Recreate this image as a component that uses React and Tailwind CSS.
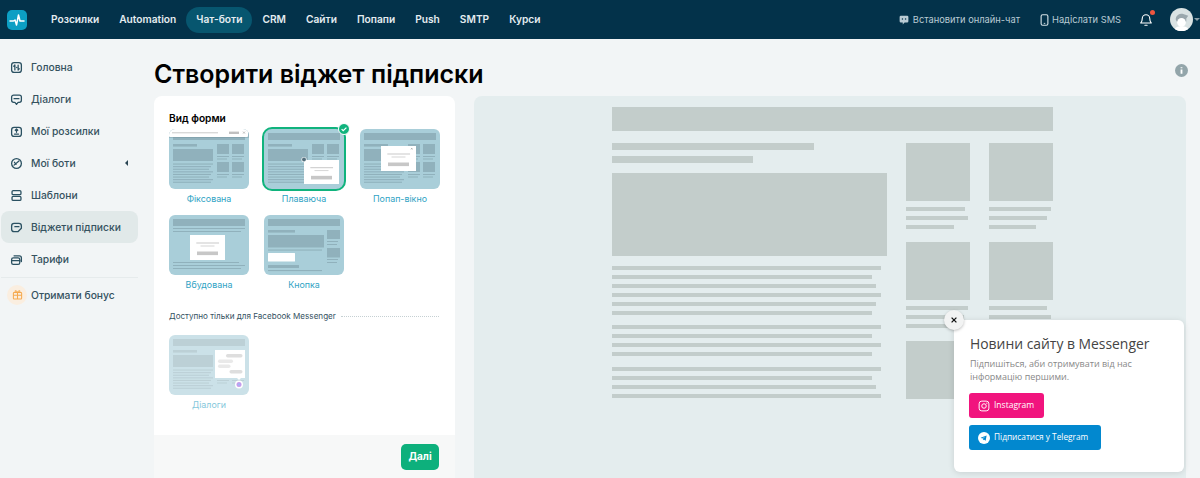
import React from 'react';

const NAV = ['Розсилки', 'Automation', 'Чат-боти', 'CRM', 'Сайти', 'Попапи', 'Push', 'SMTP', 'Курси'];
const TONE = '#90b1bc';

const stroke = { fill: 'none', stroke: 'currentColor', strokeWidth: 1.6, strokeLinecap: 'round', strokeLinejoin: 'round' };
const SIcons = {
  home: <g {...stroke}><rect x="2" y="2" width="12" height="12" rx="3" /><path d="M6 5v6M6 5 4.7 6.4M10 11V5M10 11l1.3-1.4M8.2 8h0" /></g>,
  chat: <g {...stroke}><path d="M4.5 2.5h7a2.5 2.5 0 0 1 2.5 2.5v4a2.5 2.5 0 0 1-2.5 2.5H10L8 14l-2-2.5H4.5A2.5 2.5 0 0 1 2 9V5a2.5 2.5 0 0 1 2.5-2.5Z" /><path d="M5 7h6" /></g>,
  mail: <g {...stroke}><rect x="2" y="3" width="12" height="11" rx="3" /><path d="M8 9V5M6.5 6.5 8 5l1.5 1.5M5.5 11.2h5" /></g>,
  bot: <g {...stroke}><circle cx="8" cy="8" r="6" /><path d="m5 10 6-5M5.5 6.5l2 2.5" /></g>,
  tpl: <g {...stroke}><rect x="2.5" y="2" width="11" height="5" rx="1.5" /><rect x="2.5" y="9" width="11" height="5" rx="1.5" /></g>,
  widget: <g {...stroke}><path d="M10 13H5a3 3 0 0 1-3-3V6a3 3 0 0 1 3-3h6a3 3 0 0 1 3 3v3l-4 4Z" /><path d="M6 7h5" /></g>,
  price: <g {...stroke}><rect x="2" y="6" width="10" height="8" rx="2" /><path d="M5 3.5h6.5a2.5 2.5 0 0 1 2.5 2.5v4.5M2 9.5h10" /></g>,
};

const MENU = [
  ['Головна', 'home'], ['Діалоги', 'chat'], ['Мої розсилки', 'mail'], ['Мої боти', 'bot', true],
  ['Шаблони', 'tpl'], ['Віджети підписки', 'widget', false, true], ['Тарифи', 'price'],
];

function Lines({ y, x = 4, w = 40, dy = 2.6, n = 8, c = TONE }) {
  return Array.from({ length: n }).map((_, i) => (
    <rect key={i} x={x} y={y + i * dy} width={w - (i % 3) * 2} height="1.1" fill={c} />
  ));
}

function Side({ c = TONE }) {
  return (
    <g fill={c}>
      <rect x="48" y="15" width="12" height="10" /><rect x="63" y="15" width="12" height="10" />
      <rect x="48" y="27" width="12" height="1" /><rect x="48" y="29.5" width="10" height="1" />
      <rect x="63" y="27" width="12" height="1" /><rect x="63" y="29.5" width="10" height="1" />
      <rect x="48" y="33" width="12" height="10" /><rect x="63" y="33" width="12" height="10" />
      <rect x="48" y="45" width="12" height="1" /><rect x="48" y="47.5" width="10" height="1" />
      <rect x="63" y="45" width="12" height="1" /><rect x="63" y="47.5" width="10" height="1" />
    </g>
  );
}

function Base() {
  return (
    <>
      <rect x="4" y="4" width="72" height="7" fill={TONE} />
      <rect x="4" y="15" width="24" height="2.6" fill={TONE} />
      <rect x="4" y="20" width="40" height="12" fill={TONE} />
      <Side />
      <Lines y={34.5} />
    </>
  );
}

function Card({ x, y, w, h }) {
  return (
    <g>
      <rect x={x} y={y} width={w} height={h} fill="#fff" />
      <rect x={x + w * 0.18} y={y + h * 0.3} width={w * 0.65} height="1" fill="#c9c9c9" />
      <rect x={x + w * 0.3} y={y + h * 0.42} width={w * 0.4} height="1" fill="#d6d6d6" />
      <rect x={x + w * 0.2} y={y + h * 0.66} width={w * 0.6} height="3.6" fill="#c7c7c7" />
    </g>
  );
}

function Thumb({ kind }) {
  const body = {
    fixed: (
      <>
        <Base />
        <rect x="0" y="0" width="80" height="9" fill="#6d8a95" opacity="0.35" />
        <rect x="0" y="0" width="79" height="8" rx="1" fill="#fff" />
        <rect x="3" y="3.3" width="46" height="1" fill="#c9c9c9" />
        <rect x="60" y="2.6" width="10" height="2.4" fill="#c0c0c0" />
        <path d="m74 2.6 2 2M76 2.6l-2 2" stroke="#999" strokeWidth="0.6" />
      </>
    ),
    float: (
      <>
        <Base />
        <Card x={40} y={31} w={35} h={24} />
        <circle cx="40" cy="30.5" r="2.6" fill="#fff" opacity="0.9" />
        <circle cx="40" cy="30.5" r="1.9" fill="#55707d" />
      </>
    ),
    popup: (
      <>
        <Base />
        <Card x={21} y={17} w={35} h={25} />
        <path d="m51 19 1.5 1.5m0-1.5L51 20.500" stroke="#999" strokeWidth="0.6" />
      </>
    ),
    embed: (
      <>
        <rect x="4" y="4" width="72" height="7" fill={TONE} />
        <rect x="4" y="13" width="72" height="1" fill={TONE} />
        <rect x="4" y="16" width="68" height="1" fill={TONE} />
        <Card x={21} y={20} w={35} h={25} />
        <rect x="4" y="47" width="66" height="1" fill={TONE} />
        <rect x="4" y="50" width="72" height="1" fill={TONE} />
        <rect x="4" y="53" width="68" height="1" fill={TONE} />
      </>
    ),
    button: (
      <>
        <rect x="4" y="4" width="72" height="7" fill={TONE} />
        <rect x="4" y="15" width="27" height="2.6" fill={TONE} />
        <rect x="4" y="20" width="56" height="12.500" fill={TONE} />
        <rect x="4" y="34.500" width="54" height="1.100" fill={TONE} />
        <rect x="4" y="38" width="27" height="8.600" rx="0.500" fill="#fff" />
        <rect x="4" y="50" width="31" height="3" fill={TONE} />
        <rect x="4" y="55" width="54" height="1.100" fill={TONE} />
        <rect x="63" y="15" width="13" height="9" fill={TONE} />
        <rect x="63" y="26" width="11" height="1" fill={TONE} />
        <rect x="63" y="29" width="10" height="1" fill={TONE} />
        <rect x="63" y="33" width="13" height="9.500" fill={TONE} />
        <rect x="63" y="44" width="11" height="1" fill={TONE} />
        <rect x="63" y="47" width="10" height="1" fill={TONE} />
      </>
    ),
    dialogs: (
      <>
        <Base />
        <rect x="46" y="15" width="30" height="28" fill="#fff" />
        <path d="m68 43 2 2 2-2Z" fill="#fff" />
        <rect x="57" y="19" width="16.500" height="3.500" rx="1.700" fill="#c9c9c9" />
        <rect x="49" y="24.500" width="15" height="3.500" rx="1.700" fill="#dcdcdc" />
        <rect x="49" y="29.500" width="12.500" height="3.500" rx="1.700" fill="#dcdcdc" />
        <rect x="60.500" y="35" width="13" height="3.500" rx="1.700" fill="#c9c9c9" />
        <circle cx="70" cy="49.500" r="4" fill="#fff" />
        <circle cx="70" cy="49.500" r="2.500" fill="#a05be0" />
        <circle cx="70" cy="49.500" r="1.100" fill="#5a8ff0" />
      </>
    ),
  }[kind];
  return (
    <svg viewBox="0 0 80 60" className="block w-full h-full rounded-[6px] bg-[#a9ced9]">
      {body}
    </svg>
  );
}

function Option({ kind, label, selected, dim }) {
  return (
    <div className={`w-[80px] flex flex-col items-center ${dim ? 'opacity-60' : ''}`}>
      <div className={`relative w-[80px] h-[60px] ${selected ? 'rounded-[8px] outline-[2.500px] outline-[#10b37d]' : ''}`}>
        <Thumb kind={kind} />
        {selected && (
          <span className="absolute -right-[6px] -top-[6px] w-[12px] h-[12px] rounded-full bg-[#10b37d] border border-white flex items-center justify-center">
            <svg viewBox="0 0 10 10" className="w-[8px] h-[8px]"><path d="m2 5.200 2 2 4-4" fill="none" stroke="#fff" strokeWidth="1.500" /></svg>
          </span>
        )}
      </div>
      <span className="mt-[3px] text-[8.900px] leading-[14px] text-[#2fa3c4]">{label}</span>
    </div>
  );
}

const Bar = ({ className }) => <div className={`bg-[#c3cdcb] ${className}`} />;

function TextBlock({ widths }) {
  return (
    <div className="flex flex-col gap-[5px]">
      {widths.map((w, i) => (
        <div key={i} className="h-[4px] bg-[#c3cdcb]" style={{ width: w }} />
      ))}
    </div>
  );
}

function Tile({ widths }) {
  return (
    <div className="w-[64px]">
      <Bar className="h-[58px]" />
      <div className="mt-[6px]"><TextBlock widths={widths} /></div>
    </div>
  );
}

export default function App() {
  return (
    <div className="w-[1200px] h-[478px] overflow-hidden flex flex-col bg-[#f2f5f6] font-['Inter','Noto_Sans',sans-serif]">
      <header className="h-[39px] shrink-0 bg-[#03324a] flex items-center pl-[7px] text-[#e4ecf0]">
        <div className="w-[20px] h-[20px] rounded-[5px] bg-[#0c9fc4] flex items-center justify-center">
          <svg viewBox="0 0 20 20" className="w-[20px] h-[20px]">
            <path d="M3 11h3.500l1.500-1 1.500 5 2-10 1.500 6h4" fill="none" stroke="#fff" strokeWidth="1.500" strokeLinejoin="round" strokeLinecap="round" />
          </svg>
        </div>
        <nav className="ml-[14px] flex items-center">
          {NAV.map((n) => (
            <span
              key={n}
              className={`h-[26px] flex items-center px-[10px] rounded-full text-[10.200px] font-semibold ${n === 'Чат-боти' ? 'bg-[#07566f]' : ''}`}
            >
              {n}
            </span>
          ))}
        </nav>
        <div className="ml-auto flex items-center text-[9.300px] text-[#b9cbd4]">
          <svg viewBox="0 0 16 16" className="w-[10px] h-[10px] mr-[4px]">
            <path d="M3 1h10a2 2 0 0 1 2 2v7a2 2 0 0 1-2 2H9l-3 3v-3H3a2 2 0 0 1-2-2V3a2 2 0 0 1 2-2Z" fill="#b9cbd4" />
            <circle cx="5.500" cy="6.500" r="1.200" fill="#03324a" /><circle cx="10.500" cy="6.500" r="1.200" fill="#03324a" />
          </svg>
          <span>Встановити онлайн-чат</span>
          <svg viewBox="0 0 12 16" className="ml-[20px] w-[9px] h-[12px] mr-[3px]">
            <rect x="1.500" y="1" width="9" height="14" rx="2" fill="none" stroke="#d7e3e8" strokeWidth="1.500" />
            <path d="M5 12.500h2" stroke="#d7e3e8" strokeWidth="1.200" />
          </svg>
          <span>Надіслати SMS</span>
        </div>
        <div className="relative ml-[19px] w-[12px] h-[14px]">
          <svg viewBox="0 0 16 18" className="w-[12px] h-[14px]">
            <path d="M8 2a5 5 0 0 0-5 5c0 4-2 6-2 6h14s-2-2-2-6a5 5 0 0 0-5-5ZM6.500 16h3" fill="none" stroke="#fff" strokeWidth="1.500" strokeLinejoin="round" strokeLinecap="round" />
          </svg>
          <span className="absolute -top-[3px] -right-[3px] w-[5px] h-[5px] rounded-full bg-[#f0563f]" />
        </div>
        <div className="ml-[18px] w-[23px] h-[23px] rounded-full bg-[#d9e2e3] overflow-hidden">
          <svg viewBox="0 0 24 24" className="w-[23px] h-[23px]">
            <path d="M6 12c0-4 3-6 7-6l6 2-2 3v3H7Z" fill="#9aa7ad" />
            <circle cx="12" cy="15" r="4.500" fill="#fff" />
            <path d="M4 24c1-4 4-5 8-5s7 1 8 5Z" fill="#fff" />
          </svg>
        </div>
        <span className="ml-[1px] w-0 h-0 border-x-[3px] border-x-transparent border-t-[3px] border-t-[#8ba0aa]" />
      </header>

      <div className="flex flex-1 min-h-0">
        <aside className="w-[154px] shrink-0 pt-[12px] pl-[1px]">
          <div className="w-[137px]">
            {MENU.map(([label, icon, arrow, active]) => (
              <div
                key={label}
                className={`h-[32px] flex items-center pl-[9px] pr-[10px] rounded-[8px] text-[10.300px] font-medium text-[#35525f] ${active ? 'bg-[#e1e9e9]' : ''}`}
              >
                <svg viewBox="0 0 16 16" className="w-[13px] h-[13px] shrink-0 text-[#2b5162]">{SIcons[icon]}</svg>
                <span className="ml-[8px] pt-[2px]">{label}</span>
                {arrow && <span className="ml-auto w-0 h-0 border-y-[3px] border-y-transparent border-r-[3px] border-r-[#2b4654]" />}
              </div>
            ))}
            <div className="h-px bg-[#e6ebec] mt-[2px]" />
            <div className="h-[33px] flex items-center pl-[6px] text-[10.300px] font-medium text-[#35525f]">
              <span className="w-[20px] h-[20px] rounded-full bg-[#faeee0] flex items-center justify-center">
                <svg viewBox="0 0 16 16" className="w-[11px] h-[11px]">
                  <g fill="none" stroke="#f5a94e" strokeWidth="1.500" strokeLinejoin="round">
                    <rect x="2" y="5" width="12" height="9.500" rx="1" /><path d="M8 5v9.500M2 9h12M8 5C6 1.500 3.500 2 5 5M8 5c2-3.500 4.500-3 3 0" />
                  </g>
                </svg>
              </span>
              <span className="ml-[4px] pt-[2px]">Отримати бонус</span>
            </div>
          </div>
        </aside>

        <main className="flex-1 min-w-0 flex flex-col pr-[14px]">
          <div className="h-[57px] shrink-0 flex items-center justify-between pt-[12px]">
            <h1 className="text-[25px] leading-[32px] font-semibold text-black">Створити віджет підписки</h1>
            <span className="mr-[-2px] mt-[-6px] w-[13px] h-[13px] rounded-full bg-[#93a5aa] flex items-center justify-center">
              <svg viewBox="0 0 12 12" className="w-[11px] h-[11px]"><path d="M6 2.500v1M6 5v4.500" stroke="#fff" strokeWidth="2" /></svg>
            </span>
          </div>
          <div className="flex-1 min-h-0 flex gap-[19px]">
            <section className="w-[301px] shrink-0 bg-white rounded-t-[8px] flex flex-col">
              <div className="flex-1 pl-[15px] pr-[16px] pt-[14px]">
                <div className="text-[10.200px] leading-[16px] font-semibold text-black">Вид форми</div>
                <div className="mt-[3px] grid grid-cols-[95px_96px_80px] gap-y-[9px]">
                  <Option kind="fixed" label="Фіксована" />
                  <Option kind="float" label="Плаваюча" selected />
                  <Option kind="popup" label="Попап-вікно" />
                  <Option kind="embed" label="Вбудована" />
                  <Option kind="button" label="Кнопка" />
                </div>
                <div className="mt-[17px] flex items-center text-[8.100px] leading-[14px] text-[#35525f]">
                  <span>Доступно тільки для Facebook Messenger</span>
                  <span className="ml-[5px] flex-1 border-t border-dotted border-[#c6d0d3]" />
                </div>
                <div className="mt-[12px]"><Option kind="dialogs" label="Діалоги" dim /></div>
              </div>
              <div className="h-[43px] shrink-0 bg-[#f7f8f8] flex items-center justify-end pr-[16px]">
                <button className="w-[38px] h-[26px] rounded-[5px] bg-[#0db07c] text-white text-[10px] font-bold">Далі</button>
              </div>
            </section>

            <section className="relative flex-1 min-w-0 bg-[#e4edee] rounded-t-[8px] pl-[138px] pt-[11px]">
              <Bar className="w-[441px] h-[24px]" />
              <div className="mt-[12px] w-[441px] flex justify-between">
                <div className="w-[275px]">
                  <Bar className="w-[202px] h-[7px]" />
                  <Bar className="w-[141px] h-[7px] mt-[6px]" />
                  <Bar className="h-[83px] mt-[10px]" />
                  <div className="mt-[10px]"><TextBlock widths={[269, 260, 264, 269, 264, 260]} /></div>
                  <div className="mt-[10px]"><TextBlock widths={[269, 260, 269, 260]} /></div>
                  <div className="mt-[11px]"><TextBlock widths={[269, 260, 264, 269]} /></div>
                </div>
                <div className="w-[147px] grid grid-cols-[64px_64px] justify-between gap-y-[13px] content-start">
                  <Tile widths={[59, 62, 48]} />
                  <Tile widths={[62, 58, 47]} />
                  <Tile widths={[62, 58, 48]} />
                  <Tile widths={[58, 62, 48]} />
                  <Bar className="h-[58px] w-[64px]" />
                </div>
              </div>

              <div className="absolute left-[480px] top-[224px] w-[230px] h-[152px] bg-white rounded-[6px] shadow-[0_1px_6px_rgba(0,0,0,0.12)] pl-[15px] pt-[15px] font-['Open_Sans',sans-serif]">
                <span className="absolute -left-[10px] -top-[10px] w-[20px] h-[20px] rounded-full bg-[#f2f3f3] shadow-[0_1px_3px_rgba(0,0,0,0.25)] flex items-center justify-center">
                  <svg viewBox="0 0 10 10" className="w-[8px] h-[8px]"><path d="m2 2 6 6M8 2 2 8" stroke="#111" strokeWidth="1.600" /></svg>
                </span>
                <div className="pl-px text-[13.900px] leading-[18px] text-[#444]">Новини сайту в Messenger</div>
                <div className="pl-px mt-[3px] pt-px text-[9px] leading-[13px] text-[#888] w-[180px]">Підпишіться, аби отримувати від нас інформацію першими.</div>
                <div className="mt-[10px] w-[75px] h-[25px] rounded-[3px] bg-[#f1147e] flex items-center pl-[9px] text-white text-[8.500px] font-medium">
                  <svg viewBox="0 0 16 16" className="w-[12px] h-[12px] mr-[4px]">
                    <g fill="none" stroke="#fff" strokeWidth="1.300"><rect x="1.500" y="1.500" width="13" height="13" rx="3.500" /><circle cx="8" cy="8" r="3" /></g>
                    <circle cx="11.800" cy="4.200" r="0.800" fill="#fff" />
                  </svg>
                  Instagram
                </div>
                <div className="mt-[7px] w-[132px] h-[25px] rounded-[3px] bg-[#0288cf] flex items-center pl-[9px] text-white text-[8.300px] font-medium">
                  <svg viewBox="0 0 16 16" className="w-[12px] h-[12px] mr-[4px]">
                    <circle cx="8" cy="8" r="8" fill="#fff" />
                    <path d="M3.500 7.800 11.500 4.700 10.200 11.600 7.800 9.900 6.700 11 6.500 8.900 10 6 5.600 8.500Z" fill="#0288cf" />
                  </svg>
                  Підписатися у Telegram
                </div>
              </div>
            </section>
          </div>
        </main>
      </div>
    </div>
  );
}
